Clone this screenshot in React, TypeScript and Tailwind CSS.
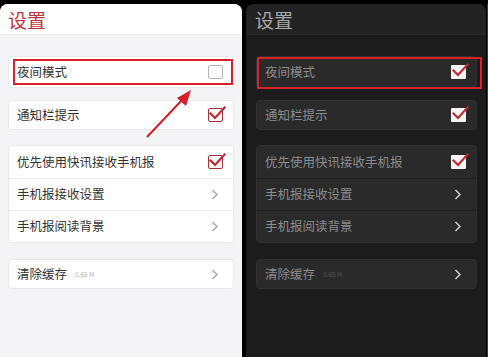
import React from "react";

const font = { fontFamily: '"Noto Sans CJK SC", "Noto Sans", sans-serif' };

function Check({ dark }: { dark?: boolean }) {
  return (
    <div className="relative w-[15px] h-[14px]">
      {dark ? (
        <div className="absolute inset-0 bg-[#f4f4f4] rounded-[1px]" />
      ) : (
        <div className="absolute inset-0 border-[1.5px] border-[#a83038] rounded-[2px]" />
      )}
      <svg className="absolute -left-[1px] -top-[3px]" width="19" height="17" viewBox="0 0 19 17">
        <path d="M3.5 8.5 L8 13 L17.5 2.5" fill="none" stroke="#c02a33" strokeWidth="2.2" strokeLinecap="square" />
      </svg>
    </div>
  );
}

function Empty() {
  return <div className="w-[15px] h-[14px] border-[1.5px] border-[#b4b4b4] rounded-[2px]" />;
}

function Chevron({ dark }: { dark?: boolean }) {
  return (
    <svg width="8" height="11" viewBox="0 0 8 11" className="mr-[4px]">
      <path d="M1.5 1 L6 5.5 L1.5 10" fill="none" stroke={dark ? "#d6d6d6" : "#a6a6a6"} strokeWidth="1.4" />
    </svg>
  );
}

function Row({
  label,
  right,
  dark,
  extra,
  divider,
  h = "h-[32px]",
}: {
  label: string;
  right: React.ReactNode;
  dark?: boolean;
  extra?: string;
  divider?: boolean;
  h?: string;
}) {
  return (
    <div
      className={`${h} flex items-center pl-[8px] pr-[10px] ${
        divider ? (dark ? "border-t border-[#1f1f1f]" : "border-t border-[#ececec]") : ""
      }`}
    >
      <span className={`text-[12.5px] leading-none ${dark ? "text-[#8c8c8c]" : "text-[#333333]"}`}>{label}</span>
      {extra && (
        <span className={`ml-[8px] text-[6.5px] leading-none ${dark ? "text-[#555555]" : "text-[#b0b0b0]"}`}>
          {extra}
        </span>
      )}
      <div className="ml-auto flex items-center">{right}</div>
    </div>
  );
}

function Panel({ dark }: { dark?: boolean }) {
  const card = dark
    ? "rounded-[4px] bg-[#2a2a2a] border border-[#303030]"
    : "rounded-[4px] bg-white border border-[#e9e9ec]";
  return (
    <div
      className={`relative flex flex-col rounded-t-[8px] overflow-hidden ${
        dark ? "bg-[#1c1c1c] w-[240px] ml-[4px]" : "bg-[#f4f3f5] w-[242px]"
      }`}
    >
      <div
        className={`h-[31px] flex items-center ${
          dark ? "bg-[#232323] border-b border-[#2a2a2a] pl-[9px]" : "bg-white border-b border-[#efefef] pl-[8px]"
        }`}
      >
        <span className={`text-[19px] leading-none ${dark ? "text-[#a9a9a9]" : "text-[#c4323c]"}`}>设置</span>
      </div>
      <div className={`flex flex-col ${dark ? "pl-[10px] pr-[9px]" : "pl-[8px] pr-[8px]"} pt-[21px]`}>
        <div className={`relative ${card}`}>
          <Row label="夜间模式" right={dark ? <Check dark /> : <Empty />} dark={dark} h="h-[30px]" />
          <div
            className={`absolute border-[2px] border-[#d8232c] ${
              dark ? "left-[0px] -right-[6px] top-[0px] -bottom-[2px]" : "left-[4px] right-[0px] top-[2px] bottom-[2px]"
            }`}
          />
        </div>
        <div className={`mt-[12px] ${card}`}>
          <Row label="通知栏提示" right={<Check dark={dark} />} dark={dark} h="h-[28px]" />
        </div>
        <div className={`mt-[15px] ${card}`}>
          <Row label="优先使用快讯接收手机报" right={<Check dark={dark} />} dark={dark} h="h-[32px]" />
          <Row label="手机报接收设置" right={<Chevron dark={dark} />} dark={dark} divider h="h-[32px]" />
          <Row label="手机报阅读背景" right={<Chevron dark={dark} />} dark={dark} divider h="h-[32px]" />
        </div>
        <div className={`mt-[16px] ${card}`}>
          <Row label="清除缓存" extra="0.65 M" right={<Chevron dark={dark} />} dark={dark} h="h-[28px]" />
        </div>
      </div>
      {!dark && (
        <svg className="absolute left-0 top-0 pointer-events-none" width="242" height="357" viewBox="0 0 242 357">
          <line x1="147" y1="133" x2="182" y2="96" stroke="#d21f2a" strokeWidth="2" />
          <polygon points="191,86 177,94 186,102" fill="#d21f2a" />
        </svg>
      )}
    </div>
  );
}

export default function App() {
  return (
    <div className="w-[488px] h-[357px] bg-black flex pt-[4px] overflow-hidden" style={font}>
      <Panel />
      <Panel dark />
      <div className="w-[1px] bg-[#3a3a3a] ml-[1px]" />
    </div>
  );
}
